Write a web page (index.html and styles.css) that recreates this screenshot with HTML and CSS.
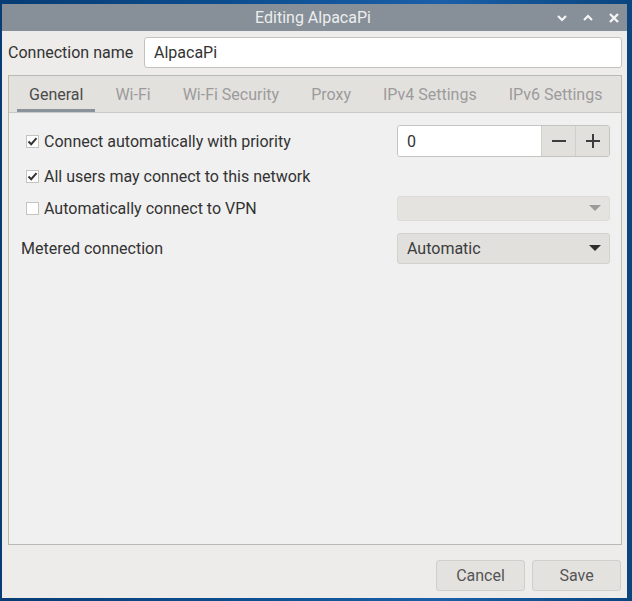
FILE: index.html
```html
<!DOCTYPE html>
<html>
<head>
<meta charset="utf-8">
<link rel="stylesheet" href="styles.css">
</head>
<body>
<div class="window">
  <div class="titlebar">
    <span class="title">Editing AlpacaPi</span>
    <div class="wbtns">
      <svg width="12" height="10" viewBox="0 0 12 10"><path d="M2 3 L6 7 L10 3" fill="none" stroke="#f4f4f4" stroke-width="2.2"/></svg>
      <svg width="12" height="10" viewBox="0 0 12 10"><path d="M2 7 L6 3 L10 7" fill="none" stroke="#f4f4f4" stroke-width="2.2"/></svg>
      <svg width="12" height="12" viewBox="0 0 12 12"><path d="M2 2 L10 10 M10 2 L2 10" fill="none" stroke="#f4f4f4" stroke-width="2.4"/></svg>
    </div>
  </div>
  <div class="content">
    <div class="namerow">
      <label class="namelabel">Connection name</label>
      <div class="entry nameentry">AlpacaPi</div>
    </div>
    <div class="notebook">
      <div class="tabs">
        <div class="tab active">General</div>
        <div class="tab">Wi-Fi</div>
        <div class="tab">Wi-Fi Security</div>
        <div class="tab">Proxy</div>
        <div class="tab">IPv4 Settings</div>
        <div class="tab">IPv6 Settings</div>
      </div>
      <div class="page">
        <div class="row row1">
          <div class="check checked"><span class="box"><svg width="11" height="11" viewBox="0 0 11 11"><path d="M1.5 5.5 L4.2 8.2 L9.5 2.2" fill="none" stroke="#333" stroke-width="2"/></svg></span>Connect automatically with priority</div>
          <div class="spin">
            <div class="spinentry">0</div>
            <div class="spinbtn"><svg width="16" height="16" viewBox="0 0 16 16"><path d="M1 8 H15" stroke="#3c3c3c" stroke-width="2"/></svg></div>
            <div class="spinbtn"><svg width="16" height="16" viewBox="0 0 16 16"><path d="M1 8 H15 M8 1 V15" stroke="#3c3c3c" stroke-width="2"/></svg></div>
          </div>
        </div>
        <div class="row row2">
          <div class="check checked"><span class="box"><svg width="11" height="11" viewBox="0 0 11 11"><path d="M1.5 5.5 L4.2 8.2 L9.5 2.2" fill="none" stroke="#333" stroke-width="2"/></svg></span>All users may connect to this network</div>
        </div>
        <div class="row row3">
          <div class="check"><span class="box"></span>Automatically connect to VPN</div>
          <div class="combo disabled"><span></span><svg width="12" height="7" viewBox="0 0 12 7"><path d="M0 0 H12 L6 6 Z" fill="#9b9b9b"/></svg></div>
        </div>
        <div class="row row4">
          <div class="label">Metered connection</div>
          <div class="combo"><span>Automatic</span><svg width="12" height="7" viewBox="0 0 12 7"><path d="M0 0 H12 L6 6 Z" fill="#2e2e2e"/></svg></div>
        </div>
      </div>
    </div>
    <div class="buttons">
      <div class="btn">Cancel</div>
      <div class="btn">Save</div>
    </div>
  </div>
</div>
</body>
</html>
```
FILE: styles.css
```css
html, body {
  margin: 0;
  padding: 0;
}
body {
  width: 632px;
  height: 601px;
  overflow: hidden;
  background: linear-gradient(90deg, #073c74 0%, #0d4f92 40%, #1a5fa8 70%, #0a457f 100%);
  font-family: Roboto, "Noto Sans", sans-serif;
  font-size: 16px;
  color: #333;
}
.window {
  margin: 4px 0 0 2px;
  width: 625px;
  height: 594px;
  display: flex;
  flex-direction: column;
  background: #edecea;
}
.titlebar {
  height: 27px;
  flex: none;
  background: #878f98;
  display: flex;
  align-items: center;
  justify-content: center;
  position: relative;
}
.title {
  color: #eceeef;
  font-size: 16px;
  margin-left: -3px;
}
.wbtns {
  position: absolute;
  right: 7px;
  top: 8px;
  display: flex;
  gap: 14px;
  align-items: center;
}
.content {
  flex: 1;
  display: flex;
  flex-direction: column;
  padding: 6px 5px 7px 6px;
}
.namerow {
  display: flex;
  align-items: center;
  height: 31px;
}
.namelabel {
  width: 136px;
}
.entry {
  background: #fff;
  border: 1px solid #c3c3bf;
  border-radius: 3px;
  box-sizing: border-box;
  height: 31px;
  display: flex;
  align-items: center;
  padding-left: 9px;
}
.nameentry {
  flex: 1;
}
.notebook {
  margin-top: 7px;
  height: 470px;
  box-sizing: border-box;
  border: 1px solid #b9b9b4;
  display: flex;
  flex-direction: column;
}
.tabs {
  height: 37px;
  flex: none;
  box-sizing: border-box;
  background: #e3e1de;
  border-bottom: 1px solid #c9c8c4;
  display: flex;
  padding-left: 8px;
  gap: 8px;
}
.tab {
  padding: 3px 12px 0;
  display: flex;
  align-items: center;
  color: #9b9b9b;
  box-sizing: border-box;
  border-bottom: 3px solid transparent;
}
.tab.active {
  color: #4a4a4a;
  border-bottom-color: #8a939c;
}
.page {
  flex: 1;
  background: #f0f0f0;
  padding: 12px 11px 0 12px;
}
.row {
  display: flex;
  align-items: center;
  justify-content: space-between;
}
.row1 { height: 32px; }
.row2 { height: 26px; margin-top: 6px; }
.row3 { height: 26px; margin-top: 6px; }
.row4 { height: 31px; margin-top: 12px; }
.check {
  display: flex;
  align-items: center;
  padding-left: 5px;
}
.box {
  width: 13px;
  height: 13px;
  box-sizing: border-box;
  border: 1px solid #c3c3bf;
  background: #fff;
  margin-right: 5px;
  display: flex;
  align-items: center;
  justify-content: center;
}
.spin {
  width: 213px;
  height: 32px;
  box-sizing: border-box;
  border: 1px solid #c3c3bf;
  border-radius: 3px;
  display: flex;
  overflow: hidden;
}
.spinentry {
  flex: 1;
  background: #fff;
  display: flex;
  align-items: center;
  padding-left: 9px;
}
.spinbtn {
  width: 33px;
  background: #e1e0dd;
  border-left: 1px solid #d0cfcb;
  display: flex;
  align-items: center;
  justify-content: center;
}
.combo {
  width: 213px;
  box-sizing: border-box;
  height: 31px;
  border: 1px solid #d2d1cd;
  border-radius: 3px;
  background: #e1e0dd;
  display: flex;
  align-items: center;
  justify-content: space-between;
  padding: 0 8px 0 9px;
  color: #3c3c3c;
}
.combo.disabled {
  height: 25px;
  background: #e4e3e0;
  border-color: #dcdbd7;
}
.buttons {
  margin-top: auto;
  display: flex;
  justify-content: flex-end;
  gap: 7px;
  padding-right: 1px;
}
.btn {
  width: 89px;
  height: 31px;
  box-sizing: border-box;
  border: 1px solid #d0cfcb;
  border-radius: 3px;
  background: #e3e2df;
  color: #555;
  display: flex;
  align-items: center;
  justify-content: center;
}
```
